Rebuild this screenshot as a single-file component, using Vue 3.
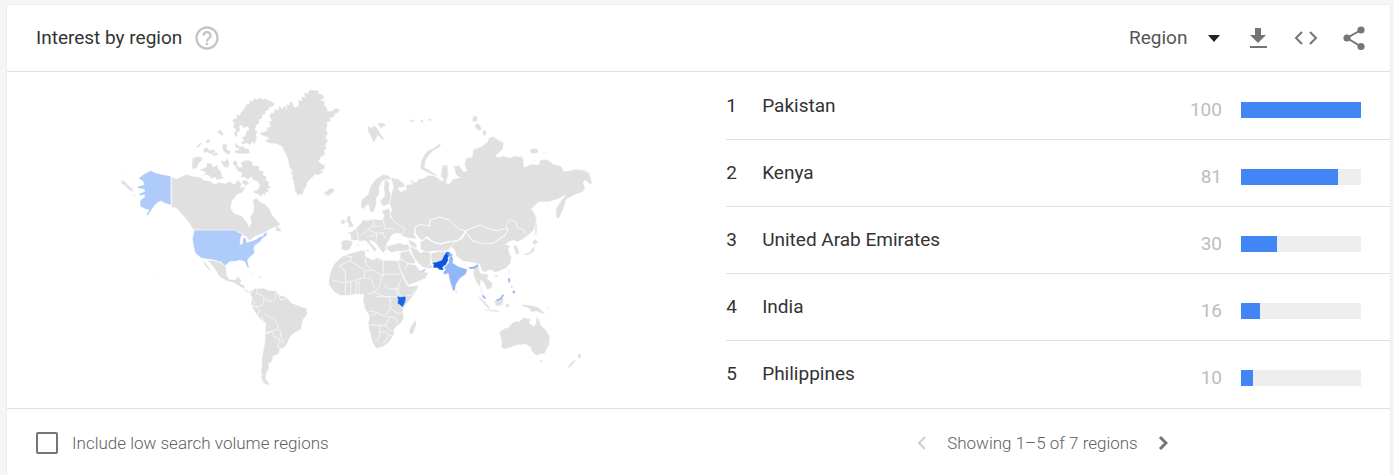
<script setup>
import { ref } from 'vue'

const scope = ref('Region')
const lowVolume = ref(false)
const regions = [
  { name: 'Pakistan', value: 100 },
  { name: 'Kenya', value: 81 },
  { name: 'United Arab Emirates', value: 30 },
  { name: 'India', value: 16 },
  { name: 'Philippines', value: 10 },
]
</script>

<template>
  <main class="card">
    <header class="head">
      <h2>Interest by region</h2>
      <button class="icon help" aria-label="Help">
        <svg viewBox="0 0 24 24" width="28" height="28"><path fill="currentColor" d="M11 18h2v-2h-2v2zm1-16C6.480 2 2 6.480 2 12s4.480 10 10 10 10-4.480 10-10S17.520 2 12 2zm0 18c-4.410 0-8-3.590-8-8s3.590-8 8-8 8 3.590 8 8-3.590 8-8 8zm0-14c-2.210 0-4 1.790-4 4h2c0-1.100.9-2 2-2s2 .9 2 2c0 2-3 1.750-3 5h2c0-2.250 3-2.500 3-5 0-2.210-1.790-4-4-4z" /></svg>
      </button>
      <div class="tools">
        <label class="scope">
          <select v-model="scope" aria-label="Resolution"><option>Region</option><option>City</option></select>
          <svg viewBox="0 0 12 7" width="12" height="7"><path fill="#212121" d="M0 0h12L6 7z" /></svg>
        </label>
        <button class="icon" aria-label="Download">
          <svg viewBox="0 0 28 28" width="28" height="28"><path fill="currentColor" d="M11 4h6v7h5l-8 8-8-8h5zM6 22h17v2H6z" /></svg>
        </button>
        <button class="icon" aria-label="Embed">
          <svg viewBox="0 0 28 28" width="28" height="28"><path fill="none" stroke="currentColor" stroke-width="2" d="M10 8l-6 6 6 6M18 8l6 6-6 6" /></svg>
        </button>
        <button class="icon" aria-label="Share">
          <svg viewBox="0 0 28 28" width="28" height="28"><path fill="none" stroke="currentColor" stroke-width="2" d="M21 6L7 14l14 8.500" /><g fill="currentColor"><circle cx="21" cy="6" r="3.600" /><circle cx="7" cy="14" r="3.600" /><circle cx="21" cy="22.500" r="3.600" /></g></svg>
        </button>
      </div>
    </header>

    <section class="body">
      <div class="map">
        <svg viewBox="107 80 500 320" width="500" height="320" role="img" aria-label="World map of interest by region">
          <g fill="#e0e0e0" stroke="#fff" stroke-width="2" stroke-linejoin="round">
            <g transform="translate(110 80) scale(.33333)" stroke-width="1">
              <path d="M184 290l15 8 16-9 20-6 5 5 10 1 22 3 8 8 20 4 15 9 14-6 16 4 14-7 15 10 10-15 10 12-2 14 14-7-6 17-20 10-15 20-3 20 10 15 23 8 15 17 8 17 6-17-4-15 10-13 2-20-4-17 12-5 13 13 12 4 14 14 8 20 14 15 10 12-8 8-16 2-10 7-18 10-22 8-19 14-5-9-15-9-20-2-8-7H258l-12-12-10-17-13-15-13-14-10-12-16-3z" />
              <path d="M405 82l6-12 6 3 2-12 8 3 8-10 6 5 8-6 8 5 12-3 4 6 14 4 8 8-9 8-8 1-2 8-10 3 1 9-9 3-2 10-8 4-1 12-8 5-4 14 8 7-6 7 4 10-7 18-8-6-4 9-12-5-10 4-8-7 10-5-7-9 12-7 2-12 9-6-6-9-9 6-9-10-6 6 2 13-9 3 2 14-8-2-3-10 6-10-9-8 4-12-7-5 8-10 7 2-2-12 10 2 3-8z" />
              <path d="M372 240l10 6 1 14 14 2-5-15 18-7 14 4 7 14 16-1 1 14 12 2-1 12 10 3-2 13 10 4-2 12 10 6-11 3 2 12-10-3 2 13-10-6-5 9-9-9-10-1-4-9 12-2 8-14-8-12-12-3-6-11-11 9-9-8-12 2 4-13-13-6-6-15-9-7z" />
              <path d="M268 270l20-8 4-14 13 4 4 10 12-8 5 14 8 8 2 14 9 2-12 6-14 2-3-8-12 4-10-12-12 2 5-10zM248 234l12-4 18 2-3 12-9 4-4 14-14 8-2-16zM280 208l10-6 10 10 12-5 5 8-14 7-12-6-9 4zM260 200l10-12 6 2-12 14zM320 155l10-6 12 14-6 5-10-8zM340 190l12 4-3 13 13 7-4 12-16-10-6-14zM375 190l14 10 10-3 4 7 14 4 3 11-18 3-26-2-3-6 16-6-14-7zM332 240l12 5 8-12 6 16-3 14-14-3zM288 180l10-2 4 9-13 3zM306 220l16-3 2 8-16 3zM393 305l14-6 11 11-11 8z" />
              <path d="M34 300l10 4 12 14 12 8 3 10-14-6-12-14-10-4zM33 270h4v3h-4zM66 346l8-4v6z" />
              <path fill="#aecbfa" stroke-width="2" d="M85 295l18-14 19-10 14 7 16 4 31 6v88l-18-6-14-7-12 8-11 14-14 22-6-2 9-15-13-3-14-8 0-18 14-10-1-7-12 4-5-7 18-7-2-6-20-3 1-6 18-5-2-10z" />
            </g>
            <g transform="translate(240 80) scale(.33333)" stroke-width="1">
              <path d="M58 160l22-8 2-10 10-2-5-14 8-5-8-14 9-10 3 5 6-17 7 7 7-16 7 12 8-12 7 12-2-15 10 2-2-8 8-2 10 18 10-6 1-17 10 2-2-12 12 2-5-15 12 4 4-10 14-2 17 4-4 7 14 4 6 11-13 5 14 4-2 12 9 8 1 10 14-1 8-8 14 1-2 10-13 7-2 8-13 3 4 9-12 4 1 12-4 9 6 14-8 10 8 10-8 15 5 10-9 4 4 12-13 8-7 14 14 10 6-3-3 16-10 2 8 6-17 10-9-2-14 14-9 8-2 13-7 9-5 15-15 2-9-14-2-18-3-14-4-3 5-10-8-4 4-10-8-12-5-25-10-20-8-16-18-8-18-2-16-5 15-10-22-8z" />
              <path d="M250 332l8 4 7-9 14-3 5 10-18 13-10-3zM384 138l12 6 4-8 12 9 10 17 10 15-4 3-14-15-8 14-5 9-6-13-12-24zM412 130l10-2 10 2 6 6-13 8-8-5z" />
              <path d="M362 380l2-20 20-16 8-25 14-20 24-16 18 5 6 14-14-5-14 6-8 18-1 22-8 12-1 22-8 19-10-1-5-24-15 17z" />
              <path d="M434 296l14 12-1 22 9 22-8 20-18 7-10-14 14-18-2-26z" />
            </g>
            <g transform="translate(360 80) scale(.33333)">
              <path d="M92 292l22 4 20 16 0 10-20 2 10 12 5-4 12-5-6-8 10-7 8 2 4-10 12 2 8-10 15-2 12-9 18 2 12 7 11 8 7-2-10-11 5-33 16-2 2 30-7 25 10 3 12-16 20-3-12-8-8-27 17-2 13 18 10-1-7-20 4-19 20-3 2-22 26-10 17-13 5-13 13-4 16 11 15 8-2 19-16 15-6 7 14 3 7-5 22 6 12-6 27 4 4 30 23-9 20 2 3-14 22-2 19 14 24 6 8 16 16-2 18-5 26 3 16 10 10 30-9 3-14-12-5 8 6 14-8 14-24 8-25 14-7 25-15 32-8-2-2-26 14-24 16-18-24 12-27 8-30 0-22 22 8 9 9 20L522 450 497 474 490 456 472 450 468 432 455 423 443 430 440 445 410 452 385 446 360 436 338 444 315 453 299 448 283 436 269 421 239 411 209 421 209 438 180 434 165 442 163 462 170 477 145 475 120 465 128 460 130 445 105 430 90 405 95 390 88 370 95 340 100 320z" />
              <path d="M180 265l2-20 10-20 12-14 18-8 17-12 5 2-6 10-18 9-12 12-10 16-4 22 15 9 14 9 13 11-9-2-18-8-15-7zM150 120l12-2 2 6-12 4zM180 120l8-1 3 8-9 1zM203 117l10-2 3 6-12 3zM335 122l6-16 10 2 3 14-9 4zM343 138l8-9 10 6 4 14-7 4-10-6zM366 160l6-12 8 6-2 12-8 2zM508 208l14-4 14 4-2 12-20 2zM545 216l14 4-8 3zM518 240l8-1-2 6zM149 302l10-2 3 6-10 2zM668 268h18l-10 4z" />
            </g>
            <g transform="translate(110 200) scale(.33333)">
              <path fill="#aecbfa" d="M253 90h122l12 8 12 4-6 9-3 20 6 2 4-23 8 6 2 11 14-4 16-6 8-7 10-2 5-10 9 0-2 10-12 7-9 12-15 10-2 11 3 10-10 9-10 9-2 8 5 21-6-2-8-18-14-4-12 3-20 2-13 13-12-12-20-6-20-3-20-4-12-10-7-8-4-18-3-23z" />
              <path d="M290 179l28 3 18 8 12 11 2 22 7 14 18 2 10-11 9 12-2 11 11 4 3 13-14-6-20-13-22-6-22-12-7-13-13-20z" />
              <path d="M415 217l10 3 14 7-10-2zM447 229l12 2-1 4-12-1zM127 225l5 4-3 4zM495 92l8-15 10 12 4 5-14 1zM400 265l18 10 10-7 5 8-15 4-15-8zM277 176l10 12 10 14 6 12-3 0-16-18z" />
              <path d="M420 285l6-13 12-10 8 4 14-2 14 6 22 2 14 13 20 7 14 16 22 9 24 8 2 18-14 18-4 26-24 14-9 10-8 18-12 16-12 4-3 14-16 6-4 16-10 6 2 12-9 18-2 10 2 8 8 10 6 8-22-6-8-20 3-8-4-8 4-20-2-16 10-50 3-60-18-12-14-20-13-22 4-24z" />
              <path fill="none" d="M439 262l2 19 19 7 2 18-8 12-16 2-19-4M440 320l10 12-8 15 17 18 2 35M466 344l24 12 14 17 1 15-20 6-14 8-10-12-4-43M470 397l17-3 5 15 17 9 1 10-9 10 18 12M509 390l6 26 7 14M463 292l10 11 11 0 13-7 1-20M505 280l7 20 20-5M463 390l-2 30-8 48-4 45 3 25M424 301l12 6-18 18" />
            </g>
            <g transform="translate(320 200) scale(.33333)">
              <path d="M64 122l14-3 20 4-2 12-7 14-13 4-11-5zM80 96l14 0 14-12 14 10-2 22-12 6-16-2 0-16z" />
              <path d="M107 85l16-16 6-10 14 2 18-4 26 3 5-14-8-12 22-10 6 14-1 14 20 18 24 16-8 16-20-2-12 6-7 14-8 12-2 18-10 10-10-15-10-15-17-9-1 6 20 19-5 11-6-6-9-14-14-15-20 2-4-24z" />
              <path d="M80 54l6-8 6 3 1 15 10 14-20 6 4-12-7-6zM62 62l9-5 6 6-5 10-10-2zM138 148l10 2-2 6-9-3zM112 128l4 0 1 10-5 1zM190 160l12 1-11 3zM232 163l8-2-6 5z" />
              <path d="M200 138l16-4 22-6 14 5 14 0 4 17-18 4-20 0-18 4-14-10zM238 155l30-3 12 20 8 16-10 4-18-2-20-12zM268 137l14 5 10 6 8 10 16-5 16 6 2 17-3 12 8 17-16 1-14-4-12-10-15-18-10-25zM264 117l20 10 8 10-6 10-16-12z" />
              <path d="M232 181l12-2 20 12 24 4 10 15 12 5 16 3-10 18-26 10-24 10-12-20-12-24z" />
              <path d="M285 82l16-8 29 4 0-17 30-10 30 10 14 15 16 12 16 5-10 15-14 15-30 2-22 6-20-6-20-16-10 13-14-8-10-16zM300 126l18-12 24 14 20 5 28-8 26-4-15 14-15 14-18 6-26-2-18 4-22-8zM333 160l28-8 24 4-10 10-10 16-26 8-6-10z" />
              <path d="M70 167l20-7 32-9 13 0 2 18 21 11 14-8 16 9 36 0 12 4 2 17 12 30 14 26 32-1-8 18-16 22-20 24-3 16 3 20-13 16-15 12-2 20-18 25-18 12-18 4-12-22-8-32-4-20 4-24-14-22-5-26 2-16-20-2-22 4-26 1-22-12-15-22 2-28 12-30 13-14z" />
              <path fill="none" d="M70 167l25 3-5 12-34 16M90 182l45 30-3 22-32 8-23 6-2-34-15-18M135 173l4 24 20 12 29 20 3-48M136 212l25-1M186 230l5-8 50 1M184 230l-5 28-20 20-16 4M191 255l14 12 28-1 10-28M133 234l20 0 10 30M110 242l-3 38M77 248l-2 34M38 240l37 10M93 248l-2 35M118 280l-2-36M160 276l24 10 20 5 29-1-5-24M165 290l45 0 2 35-18 25-26-14-20-2M212 325l20 15 18-3M202 350l22 2 10 18M148 375l50 2 8-26M180 377l-2 38-12 8M180 397l16-2 12 10 18 6M198 377l13 15 16 0M205 405l-5 14-12 12M155 345l15-4M257 288l18-2 12-16M233 266l8 22M160 58l2 18-18 12M185 80l-23-2M190 60l4 26 30 0M144 88l24 12 25-2M122 108l20-18M170 100l-2 22M188 100l10 18M140 110l25-4M238 180l4-24M264 190l-10 18M330 192l-20 20" />
              <path d="M286 358l4 14-11 31-9 1-3-14 7-13z" />
              <path fill="#1a66e8" stroke-width="1" d="M231 288l10 3 14-2 3 5-3 14-7 14-16-13 2-9z" />
              <path fill="#0b57dc" stroke-width="1" d="M336 188l14-2 16-6 5-12 9-13 6 1 7 9-9 7 1 8-7 14-10 7 3 10-14-2-3-5-15-1 2-10z" />
              <path fill="#92b7f6" stroke-width="1" d="M388 170l7-3 5 10-2 12 18 11 26 8-4 14-18 13-12 18-3 18-6 2-10-32-4-21-11 4-5-6 8-10-6-5 14-13z" />
              <path fill="#92b7f6" stroke-width="1" d="M298 212l8 0 10-6 0 6-10 4zM386 154l4 1 6 9-4 2z" />
            </g>
            <g transform="translate(430 200) scale(.33333)">
              <path d="M105 93l22 30 32 7 30 0 36-23 8-18-4-12 3-12 13-6 13 8 4 16 18 6 7 14 5 4-15 12-16 8-8-6-14 3-12 10 16 3-8 10 4 13 6 11-3 17-12 16-22 10-14 3-14-8-14 8-10-4-8-20-20-5-28-4-20-14-8-22-10-8 14-14 20-10 10-17z" />
              <path d="M105 93l23-9 22-8 26 10 24 6 30-7 3 5-10 17-34 23-30 1-30-8zM130 208l14-10 8 22 24 2-4 14 17 14-4 14-14 5-8-18-10-11-2 18 10 26-5 0-8-26-8-8-10-24z" />
              <g stroke-width="1">
                <path d="M250 138l9-4 9 24-8 8-5-12zM278 164l22-8 10-15 4 0-2 14-18 10zM306 126l10-8 9 8-11 10zM316 64l5 10-2 38-4-12zM237 208l3-1-2 13-4-3zM194 226l8-2 2 6-8 2zM76 270l6 2-1 8-5-3zM141 286l12 8 14 14 13 15-3 4-16-16zM163 328l34 3 18 5-16 0-33-5zM191 303l14-2 16-8-3 22-18 4zM228 312l8-2 2 6-5 8-6-4zM275 313l16 2 12 1 22 6 22 20-14-2-12-6-16 2-10-12-18-6zM350 322l8 2-4 4zM328 481l10-1-4 9zM448 460l7 6-6 10-8-5zM438 478l-6 10-14 16-4-4 15-18z" />
                <path d="M208 395l17-10 10-2 10-12 12-8 10 3 12-13 22 3-3 14 14 9 6-9 2-22 8 13 4 15 16 14 12 22-3 23-14 26-12 1-12 5-14-14-4-12-14-8-26 2-22 8-17 4-8-4 1-20z" />
              </g>
              <g fill="#92b7f6" stroke="none"><path d="M115 201l14 0 14-8 3 5-12 8-14 1zM157 284l7 4 4 8-4 1-7-7zM197 300l14-6 7-12 4 3-7 13-13 5zM234 236l5-3 2 11-5 6zM246 274l8-2 2 6-5 3zM244 258l4 4-3 3zM50 158l10 6 10-2-6 8-10-4z" /></g>
            </g>
          </g>
        </svg>
      </div>

      <ol class="list">
        <li v-for="(r, i) in regions" :key="r.name">
          <span class="rank">{{ i + 1 }}</span>
          <span class="name">{{ r.name }}</span>
          <span class="value">{{ r.value }}</span>
          <span class="track"><span class="fill" :style="{ width: r.value + '%' }"></span></span>
        </li>
      </ol>
    </section>

    <footer class="foot">
      <label class="low"><input v-model="lowVolume" type="checkbox" />Include low search volume regions</label>
      <nav class="pager" aria-label="Pages">
        <button class="prev" disabled aria-label="Previous"><svg viewBox="0 0 10 16" width="10" height="16"><path fill="none" stroke="currentColor" stroke-width="2" d="M8 2L2 8l6 6" /></svg></button>
        <span>Showing 1–5 of 7 regions</span>
        <button aria-label="Next"><svg viewBox="0 0 10 16" width="10" height="16"><path fill="none" stroke="currentColor" stroke-width="3" d="M2 2l6 6-6 6" /></svg></button>
      </nav>
    </footer>
  </main>
</template>

<style>
body {
  background: #f6f6f6;
}
</style>

<style scoped>
.card {
  margin: 5px 4px 0 7px;
  background: #fff;
  border-radius: 2px;
  box-shadow: 0 0 2px rgba(0, 0, 0, 0.14);
  font-family: Roboto, sans-serif;
  color: #333;
}
button {
  border: 0;
  padding: 0;
  background: none;
  display: flex;
  color: #757575;
}
.head {
  display: flex;
  align-items: center;
  height: 66px;
  padding: 0 22px 0 29px;
  border-bottom: 1px solid #e0e0e0;
}
h2 {
  margin: 0;
  font-size: 19px;
  font-weight: 400;
  line-height: 24px;
}
.help {
  margin-left: 11px;
  color: #c4c4c4;
}
.tools {
  display: flex;
  align-items: center;
  gap: 20px;
  margin-left: auto;
}
.scope {
  display: flex;
  align-items: center;
  margin-right: 4px;
}
select {
  appearance: none;
  border: 0;
  padding: 0;
  width: 79px;
  background: none;
  font: 19px/24px Roboto, sans-serif;
  color: #555;
}
.body {
  display: grid;
  grid-template-columns: 13fr 12fr;
}
.map {
  display: flex;
  justify-content: center;
  padding: 8px 20px 8px 0;
}
.map svg {
  max-width: 100%;
}
.list {
  margin: 0;
  padding: 1px 0 0;
  list-style: none;
}
li {
  display: flex;
  align-items: center;
  height: 66px;
  padding-right: 29px;
  border-bottom: 1px solid #e0e0e0;
  font-size: 19px;
  line-height: 24px;
}
li:last-child {
  border-bottom: 0;
}
.rank {
  width: 36px;
}
.name {
  flex: 1;
}
.value {
  padding-top: 8px;
  color: #bdbdbd;
}
.track {
  width: 120px;
  height: 16px;
  margin: 8px 0 0 19px;
  background: #eee;
}
.fill {
  display: block;
  height: 100%;
  background: #4285f4;
}
.foot {
  display: grid;
  grid-template-columns: 13fr 12fr;
  align-items: center;
  height: 68px;
  border-top: 1px solid #e0e0e0;
  font-size: 17px;
  font-weight: 300;
  line-height: 20px;
  color: #616161;
}
.low {
  display: flex;
  align-items: center;
  gap: 14px;
  padding-left: 29px;
}
input {
  appearance: none;
  width: 22px;
  height: 22px;
  margin: 0;
  border: 2px solid #757575;
  border-radius: 2px;
}
.pager {
  display: flex;
  align-items: center;
  gap: 20px;
  padding-left: 191px;
}
.pager .prev {
  color: #d0d0d0;
}
</style>
